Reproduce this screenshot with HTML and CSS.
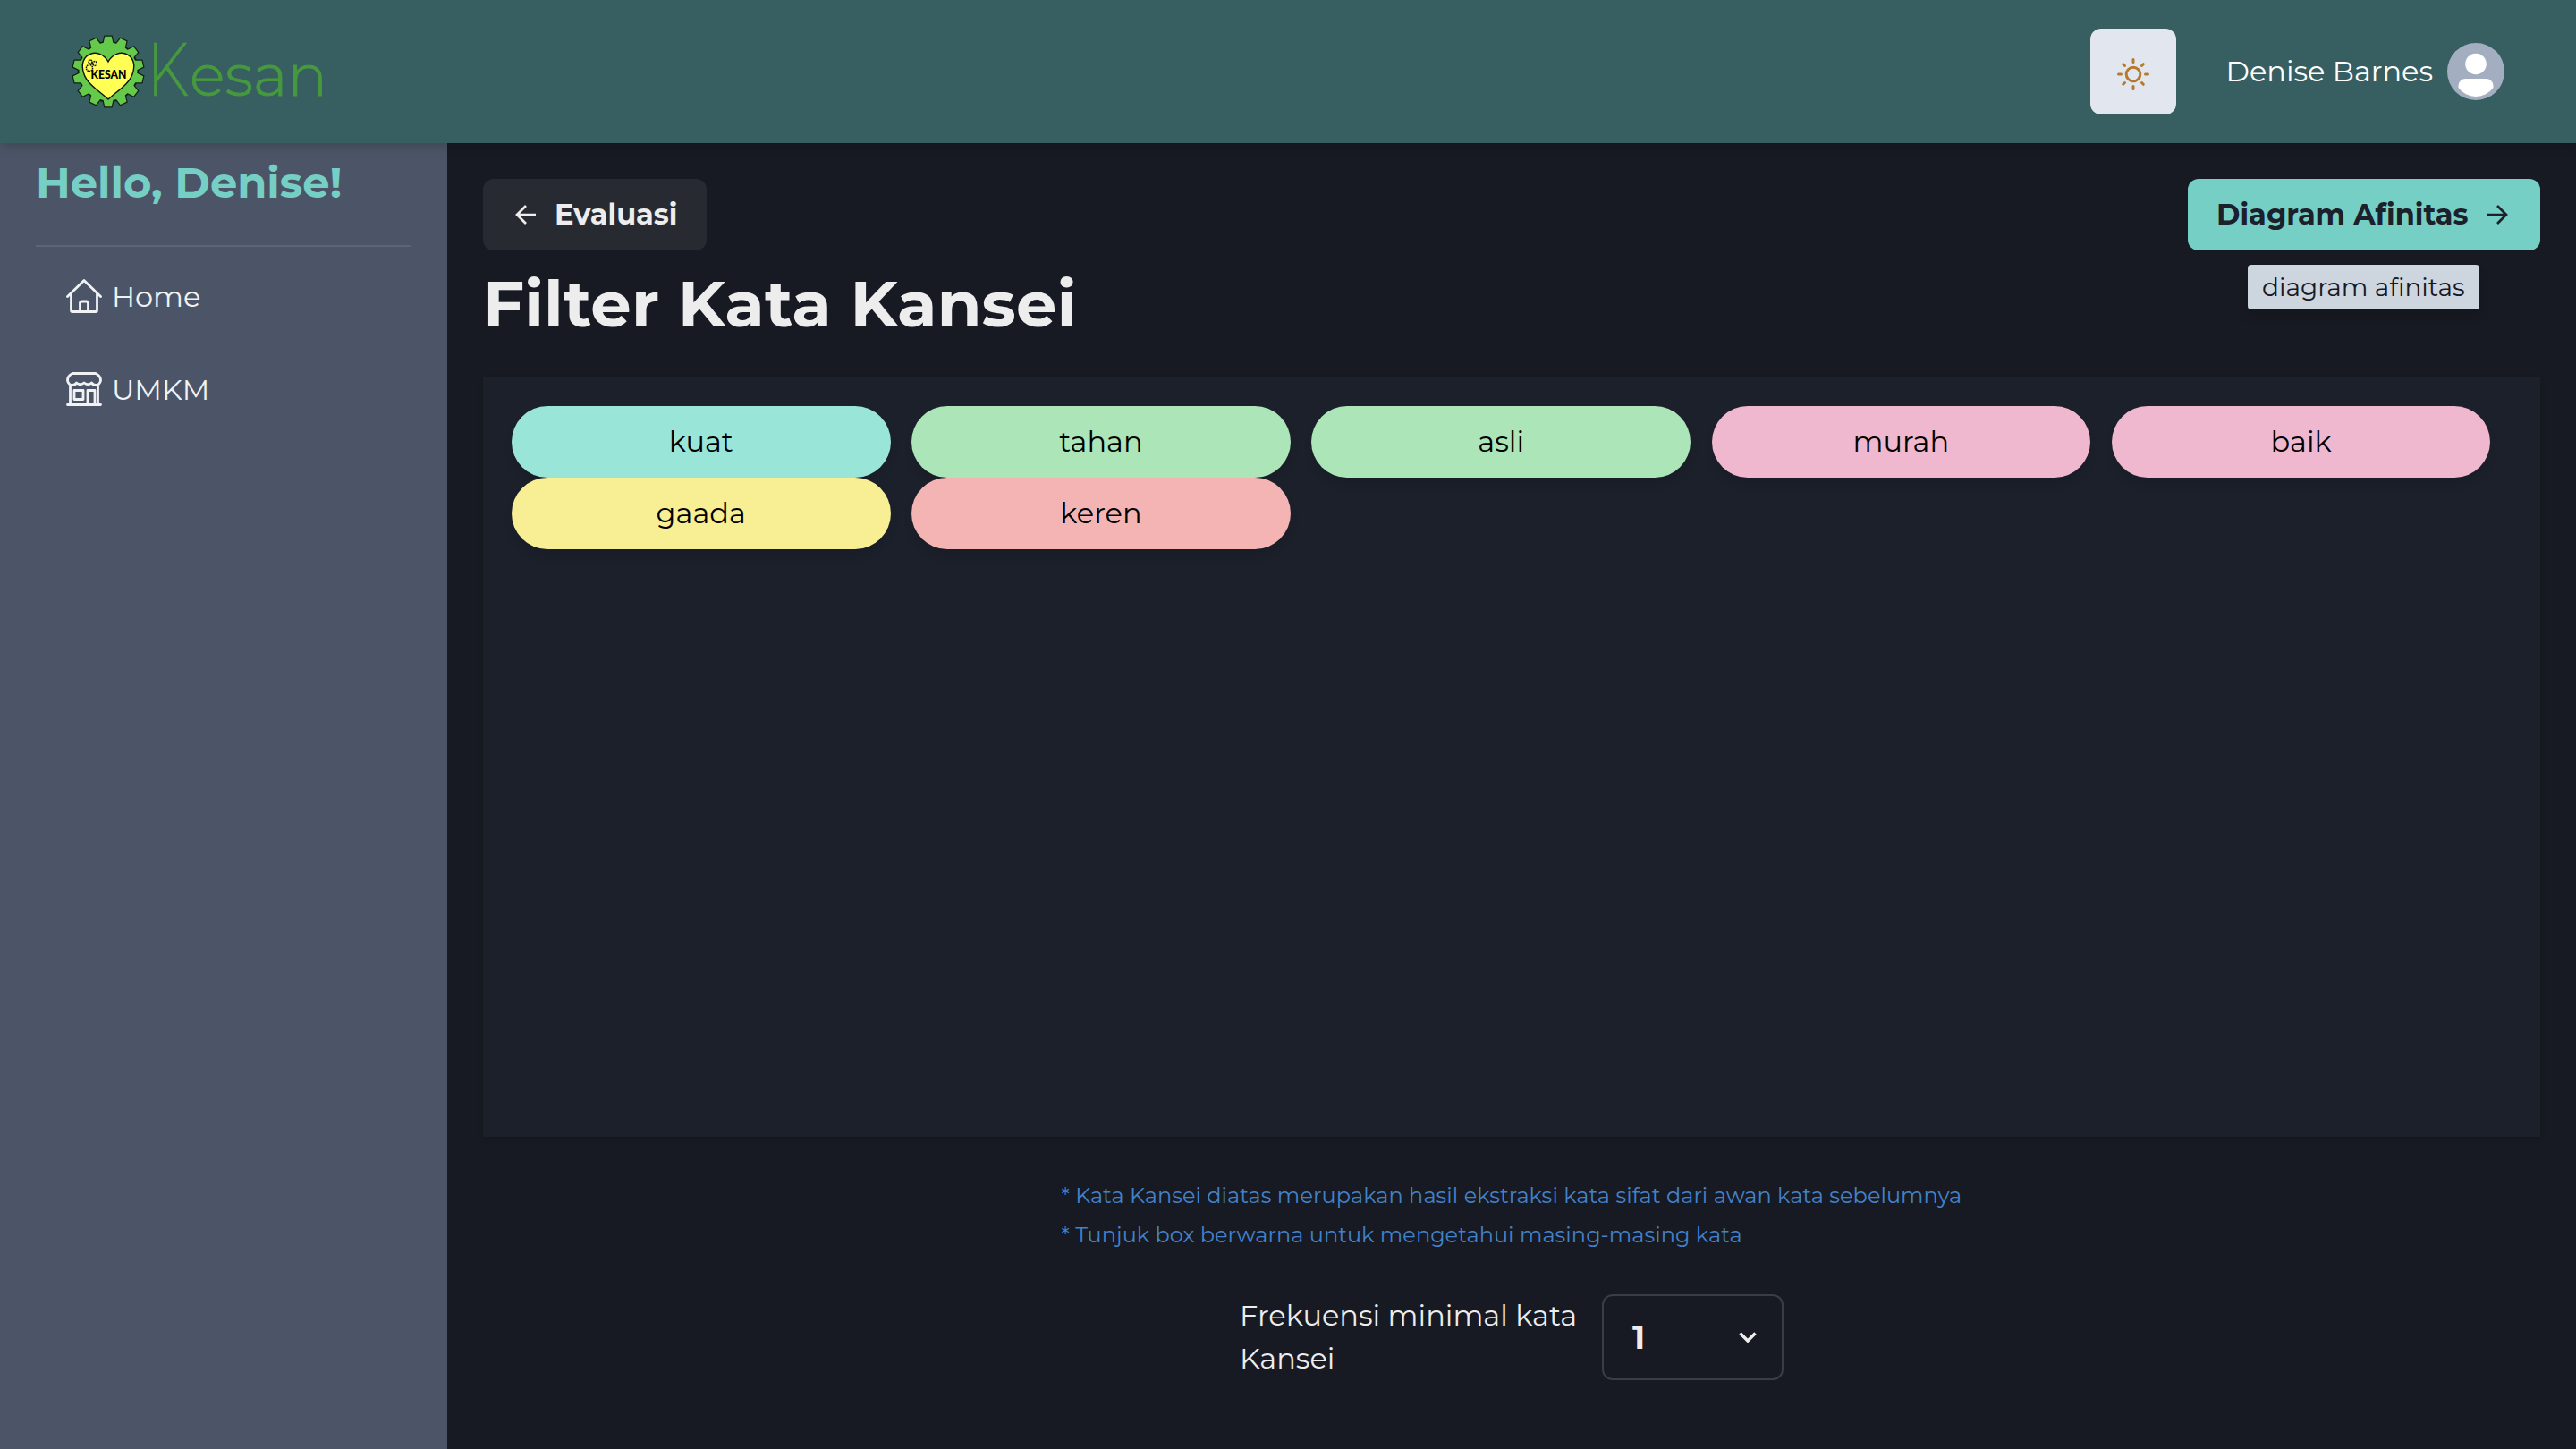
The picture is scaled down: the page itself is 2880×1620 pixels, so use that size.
FILE: index.html
```html
<!DOCTYPE html>
<html lang="id">
<head>
<meta charset="utf-8">
<title>Filter Kata Kansei</title>
<link rel="stylesheet" href="styles.css">
</head>
<body>
<header class="header">
  <svg class="logo" viewBox="0 0 300 120" role="img" aria-label="Kesan">
    <g transform="translate(46 60)">
      <g class="gear-edge">
        <circle r="33"/>
        <g id="teeth">
          <path id="tooth" d="M-5.600-31L-3.700-39.3H3.700L5.600-31Z"/>
          <use href="#tooth" transform="rotate(25.714)"/>
          <use href="#tooth" transform="rotate(51.429)"/>
          <use href="#tooth" transform="rotate(77.143)"/>
          <use href="#tooth" transform="rotate(102.857)"/>
          <use href="#tooth" transform="rotate(128.571)"/>
          <use href="#tooth" transform="rotate(154.286)"/>
          <use href="#tooth" transform="rotate(180)"/>
          <use href="#tooth" transform="rotate(205.714)"/>
          <use href="#tooth" transform="rotate(231.429)"/>
          <use href="#tooth" transform="rotate(257.143)"/>
          <use href="#tooth" transform="rotate(282.857)"/>
          <use href="#tooth" transform="rotate(308.571)"/>
          <use href="#tooth" transform="rotate(334.286)"/>
        </g>
      </g>
      <g class="gear-fill">
        <circle r="32.5"/>
        <use href="#teeth"/>
      </g>
      <path class="heart" d="M0-11C-5-20-14-22-19-20C-28-17-31-8-27 3C-24 13-10 22 0 31C10 22 24 13 27 3C31-8 28-17 19-20C14-22 5-20 0-11Z"/>
      <g class="cogs"><circle cx="-21" cy="-4" r="3.6"/><circle cx="-20" cy="-11" r="2"/><circle cx="-15" cy="-9" r="2.4"/></g>
      <text class="logo-badge" x="-19.5" y="7.5" textLength="40" lengthAdjust="spacingAndGlyphs">KESAN</text>
    </g>
    <text class="logo-word logo-initial" x="89" y="87.3" textLength="47" lengthAdjust="spacingAndGlyphs">K</text>
    <text class="logo-word" x="137" y="87.3" textLength="154" lengthAdjust="spacingAndGlyphs">esan</text>
  </svg>
  <div class="header-actions">
    <button class="theme-button" aria-label="Tema">
      <svg class="sun" viewBox="0 0 40 40"><circle cx="20" cy="20" r="7.8"/><path d="M20 3.500V6.500M20 33.500v3M3.500 20H6.500M33.500 20h3M8.700 8.700l1.800 1.800M29.500 29.500l1.800 1.800M8.700 31.300l1.800-1.800M29.500 10.500l1.800-1.800"/></svg>
    </button>
    <div class="user"><span>Denise Barnes</span>
      <svg class="avatar" viewBox="0 0 64 64"><circle cx="32" cy="32" r="32" fill="#a3afc0"/><circle cx="32" cy="23.5" r="11.8" fill="#fff"/><path d="M12.5 50v-2a8 8 0 0 1 8-8h23a8 8 0 0 1 8 8v2a24 24 0 0 1-39 0Z" fill="#fff"/></svg>
    </div>
  </div>
</header>
<div class="body">
  <aside class="sidebar">
    <h2 class="greeting">Hello, Denise!</h2>
    <nav class="nav">
      <a class="nav-item"><svg class="nav-icon" viewBox="0 0 40 40"><path d="M1.5 20.5L20 2.5l18.500 18M5.500 17.500V36q0 1.500 1.500 1.500h26q1.500 0 1.500-1.500V17.500M15.500 37V28q0-2 2-2h5q2 0 2 2v9"/></svg><span>Home</span></a>
      <a class="nav-item"><svg class="nav-icon" viewBox="0 0 40 40"><path d="M7 2.500h26q5.500 2.500 5.500 8q-1 5-5.500 5q-3 0-4.500-2.500q-4 3.500-8.500 0q-4.500 3.500-8.500 0q-1.500 2.500-4.500 2.500q-4.500 0-5.500-5q0-5.500 5.500-8ZM4.500 16v21M35.500 16v21M1.500 37.500h37M9 21.500h10v10H9ZM24 37V21.500h8V37"/></svg><span>UMKM</span></a>
    </nav>
  </aside>
  <main class="main">
    <div class="toolbar">
      <button class="button button-back"><svg class="arrow" viewBox="0 0 24 24"><path d="M23 12H2M12 2L2 12l10 10"/></svg><span>Evaluasi</span></button>
      <button class="button button-next"><span>Diagram Afinitas</span><svg class="arrow" viewBox="0 0 24 24"><path d="M1 12h21M12 2l10 10-10 10"/></svg><span class="tooltip">diagram afinitas</span></button>
    </div>
    <h1 class="title">Filter Kata Kansei</h1>
    <section class="panel">
      <div class="tag aqua">kuat</div><div class="tag green">tahan</div><div class="tag green">asli</div><div class="tag pink">murah</div><div class="tag pink">baik</div><div class="tag yellow">gaada</div><div class="tag coral">keren</div>
    </section>
    <div class="notes"><p>* Kata Kansei diatas merupakan hasil ekstraksi kata sifat dari awan kata sebelumnya</p><p>* Tunjuk box berwarna untuk mengetahui masing-masing kata</p></div>
    <div class="frequency">
      <label class="frequency-label"><span>Frekuensi minimal kata</span><br><span>Kansei</span></label>
      <div class="select"><span>1</span><svg class="chevron" viewBox="0 0 20 12"><path d="M1.500 1.500L10 10l8.500-8.500"/></svg></div>
    </div>
  </main>
</div>
</body>
</html>
```
FILE: styles.css
```css
* { box-sizing: border-box; }
body { margin: 0; height: 1620px; background: #171a22; color: #ededed; font-family: Montserrat, Inter, sans-serif; font-size: 32px; font-weight: 400; line-height: 48px; overflow: hidden; }
h1, h2, p { margin: 0; }
button { font: inherit; border: 0; padding: 0; }
svg { flex: none; }
span, p { white-space: nowrap; }
.header { position: relative; z-index: 1; display: flex; justify-content: space-between; align-items: center; height: 160px; padding: 0 80px 0 75px; background: #375e60; box-shadow: 0 8px 12px -2px rgba(0,0,0,.1), 0 4px 8px -2px rgba(0,0,0,.06); }
.logo { width: 300px; height: 120px; }
.gear-edge { fill: #000; stroke: #10200e; stroke-width: 2.4; }
.gear-fill { fill: #65ca4b; stroke: none; }
.heart { fill: #ffff54; stroke: #111; stroke-width: 1.4; }
.cogs { fill: none; stroke: #111; stroke-width: 1.5; stroke-dasharray: 1.6 .6; }
.logo-badge { font: 900 14px Lato, sans-serif; fill: #000; }
.logo-word { font-size: 65px; font-weight: 300; fill: #47993f; stroke: #47993f; stroke-width: .9; }
.logo-initial { font-size: 83px; stroke-width: .3; }
.header-actions { display: flex; align-items: center; gap: 56px; }
.theme-button { display: flex; align-items: center; justify-content: center; width: 96px; height: 96px; padding-top: 6px; border-radius: 12px; background: #e2e6ee; }
.sun { width: 40px; height: 40px; fill: none; stroke: #b57a2d; stroke-width: 3; stroke-linecap: round; }
.user { display: flex; align-items: center; gap: 16px; color: #fff; }
.avatar { width: 64px; height: 64px; }
.body { display: flex; height: 1460px; }
.sidebar { width: 500px; padding: 0 40px; background: #4c5567; }
.greeting { height: 116px; padding-top: 14px; border-bottom: 2px solid #5c6475; color: #76cfc5; font-size: 48px; line-height: 60px; font-weight: 700; white-space: nowrap; }
.nav { display: flex; flex-direction: column; gap: 56px; padding: 32px 34px; }
.nav-item { display: flex; align-items: center; gap: 11px; height: 48px; color: #f1f2f4; }
.nav-icon { width: 40px; height: 40px; margin-top: -2px; fill: none; stroke: #f1f2f4; stroke-width: 2.8; stroke-linecap: round; stroke-linejoin: round; }
.main { flex: 1; padding: 40px; }
.toolbar { display: flex; justify-content: space-between; }
.button { display: flex; align-items: center; height: 80px; border-radius: 12px; font-weight: 700; }
.button-back { width: 250px; padding-left: 36px; gap: 20px; background: #282a32; color: #ededed; }
.button-next { position: relative; width: 394px; padding: 0 36px 0 32px; justify-content: space-between; background: #76cfc5; color: #1b202b; }
.arrow { width: 24px; height: 24px; fill: none; stroke: currentColor; stroke-width: 2.7; }
.tooltip { position: absolute; left: 67px; top: 96px; width: 259px; height: 50px; padding-left: 16px; border-radius: 4px; background: #cdd5df; color: #171923; font-size: 28px; line-height: 50px; font-weight: 400; text-align: left; box-shadow: 0 8px 12px rgba(0,0,0,.12); }
.title { height: 142px; padding-top: 14px; font-size: 72px; line-height: 90px; font-weight: 700; letter-spacing: .2px; white-space: nowrap; }
.panel { display: grid; grid-template-columns: repeat(5, 1fr); grid-auto-rows: 80px; align-content: start; height: 849px; padding: 32px; background: #1c202b; box-shadow: 0 2px 6px rgba(0,0,0,.15); }
.tag { margin-right: 23.700px; border-radius: 40px; color: #000; line-height: 80px; text-align: center; box-shadow: 0 8px 12px -2px rgba(0,0,0,.12); }
.aqua { background: #99e5d8; }
.green { background: #abe5b8; }
.pink { background: #f0b8ce; }
.yellow { background: #f8ee94; }
.coral { background: #f4b4b4; }
.notes { width: 1007px; margin: 44px auto 0; color: #4382cb; font-size: 24px; line-height: 44px; letter-spacing: .04px; }
.frequency { display: flex; align-items: center; justify-content: center; height: 96px; margin-top: 44px; gap: 28px; }
.frequency-label { width: 377px; }
.select { display: flex; align-items: center; justify-content: space-between; width: 203px; height: 96px; padding: 0 28px 0 32px; border: 2px solid #3b3d45; border-radius: 12px; font-size: 36px; font-weight: 700; }
.chevron { width: 20px; height: 12px; fill: none; stroke: #ededed; stroke-width: 3.5; stroke-linecap: butt; stroke-linejoin: miter; }
```
